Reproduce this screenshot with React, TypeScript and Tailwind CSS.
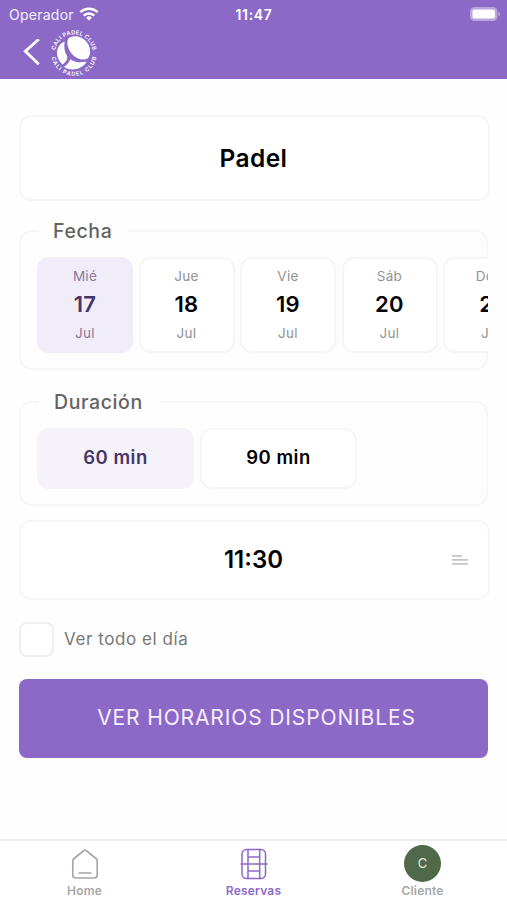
import { useState } from 'react'

interface Day {
  weekday: string
  day: string
  month: string
}

const days: Day[] = [
  { weekday: 'Mié', day: '17', month: 'Jul' },
  { weekday: 'Jue', day: '18', month: 'Jul' },
  { weekday: 'Vie', day: '19', month: 'Jul' },
  { weekday: 'Sáb', day: '20', month: 'Jul' },
  { weekday: 'Dom', day: '21', month: 'Jul' }
]

const durations = ['60 min', '90 min']

function WifiIcon() {
  return (
    <svg width="20" height="14" viewBox="0 0 20 14" fill="none" stroke="white" strokeWidth="2.5">
      <path d="M1.4 5.2a12.2 12.2 0 0 1 17.2 0" />
      <path d="M4.7 8.7a7.5 7.5 0 0 1 10.6 0" />
      <path d="M10 13.6 7.1 10.8a4.1 4.1 0 0 1 5.8 0z" fill="white" stroke="none" />
    </svg>
  )
}

function BatteryIcon() {
  return (
    <svg width="32" height="14" viewBox="0 0 32 14">
      <rect x="1" y="0" width="27.5" height="14" rx="4.5" fill="white" fillOpacity="0.4" />
      <rect x="3.5" y="2.5" width="22.5" height="9" rx="2" fill="white" />
      <path d="M29.5 4.8c2 .8 2 3.6 0 4.4z" fill="white" fillOpacity="0.5" />
    </svg>
  )
}

function ClubLogo() {
  return (
    <svg width="50" height="50" viewBox="0 0 50 50" fill="white">
      <defs>
        <path id="arc-top" d="M6.3 25a18.7 18.7 0 0 1 37.4 0" />
        <path id="arc-bottom" d="M2.1 25a22.9 22.9 0 0 0 45.8 0" />
      </defs>
      <text className="font-['Inter'] text-[5.6px] font-semibold" textAnchor="middle">
        <textPath href="#arc-top" startOffset="50%" textLength="53">CALI PADEL CLUB</textPath>
      </text>
      <text className="font-['Inter'] text-[5.6px] font-semibold" textAnchor="middle">
        <textPath href="#arc-bottom" startOffset="50%" textLength="63">CALI PADEL CLUB</textPath>
      </text>
      <path d="M19.3 10.4C23 7.6 30 7.6 34.5 11c5.2 3.9 7.6 9.7 6.3 15.4-.5 2.2-1.3 3.4-2.3 4.2-5.3 2.1-11.600.1-15.600-4.700-4-4.900-5.700-11.100-3.600-15.500z" />
      <path d="M15.600 13.400c-.8 5.200-.2 10.300 2.500 14.600 1 2.400-.8 5.800-4.500 8.400-3.700-3-5.600-7.200-5.600-11.900 0-4.700 3.200-9.300 7.600-11.100z" />
      <path d="M21.100 31.200c4.300 2.900 9.300 3.700 15 2.600 1-.2 1.600.1.900 1C32 42 20.500 43.400 15 38.800c3.200-2 5.200-4.200 6.100-7.600z" />
    </svg>
  )
}

function HomeIcon() {
  return (
    <svg width="28" height="32" viewBox="0 0 28 32" fill="none" stroke="#a7a7a7" strokeWidth="1.7" strokeLinejoin="round" strokeLinecap="round">
      <path d="M13 2.5Q14 1.8 15 2.5L25 10.5q1.2 1 1.2 2.4V27q0 3-3 3H4.8q-3 0-3-3V12.9q0-1.400 1.200-2.400z" />
      <path d="M8.2 25h11.6" />
    </svg>
  )
}

function CourtIcon() {
  return (
    <svg width="28" height="32" viewBox="0 0 28 32" fill="none" stroke="#8c69c7" strokeWidth="1.5" strokeLinecap="round">
      <rect x="2" y="1.5" width="23.5" height="29" rx="4.5" />
      <path d="M8 1.5v29M19.7 1.5v29M1 16h26M8 9h11.7M8 23h11.7" />
    </svg>
  )
}

export default function App() {
  const [selectedDay, setSelectedDay] = useState(0)
  const [selectedDuration, setSelectedDuration] = useState(0)
  const [allDay, setAllDay] = useState(false)

  return (
    <div className="flex h-[900px] w-[507px] flex-col overflow-hidden bg-[#fefefe] font-['Inter',sans-serif]">
      <header className="h-[79px] shrink-0 bg-[#8c69c7] text-white">
        <div className="grid h-7 grid-cols-3 items-center pr-[6px] pl-[9px]">
          <div className="flex items-center gap-[5px]">
            <span className="text-[14px] tracking-[0.25px] text-white/90">Operador</span>
            <WifiIcon />
          </div>
          <span className="pr-[2px] text-center text-[14px] font-semibold tracking-[0.7px]">11:47</span>
          <div className="flex justify-end pb-px">
            <BatteryIcon />
          </div>
        </div>
        <div className="flex h-[50px] items-center pl-[23px]">
          <svg width="18" height="28" viewBox="0 0 18 28" fill="none" stroke="white" strokeWidth="2.8">
            <path d="M15.8 .3 2.3 12.3 15.8 25.3" />
          </svg>
          <div className="ml-2">
            <ClubLogo />
          </div>
        </div>
      </header>

      <main className="flex flex-1 flex-col pt-9 pr-[17px] pl-[19px]">
        <div className="flex h-[86px] items-center justify-center rounded-xl border-2 border-[#f6f6f6] bg-white pr-[2px] text-[24.5px] font-semibold tracking-[0.4px] text-black">
          Padel
        </div>

        {/* Fecha */}
        <section className="mt-[29px] mr-[2px] h-[140px] rounded-xl border-2 border-[#f7f7f7] bg-[#fdfdfd]">
          <div className="-mt-[14px] ml-[18px] flex h-7 w-[89px] items-center bg-[#fefefe] pl-[14px] text-[19.5px] font-medium tracking-[0.6px] text-[#636363]">
            Fecha
          </div>
          <div className="mt-[11px] -mr-[2px] flex gap-[5.5px] overflow-hidden pl-4">
            {days.map((item, index) => {
              const selected = index === selectedDay

              return (
                <button
                  key={item.day}
                  onClick={() => setSelectedDay(index)}
                  className={`flex h-24 w-24 shrink-0 flex-col items-center rounded-xl border-2 pt-[7px] ${
                    selected ? 'border-[#f1edf8] bg-[#f1edf8] text-[#443667]' : 'border-[#f6f6f6] bg-white text-black'
                  }`}
                >
                  <span className={`text-[13.5px] leading-5 tracking-[0.3px] ${selected ? 'text-[#857b9d]' : 'text-[#929292]'}`}>
                    {item.weekday}
                  </span>
                  <span className="mt-[3px] text-[22px] leading-[30px] font-semibold tracking-[0.3px]">{item.day}</span>
                  <span className={`mt-1 text-[13.5px] leading-5 tracking-[0.3px] ${selected ? 'text-[#857b9d]' : 'text-[#929292]'}`}>
                    {item.month}
                  </span>
                </button>
              )
            })}
          </div>
        </section>

        {/* Duración */}
        <section className="mt-[31px] mr-[2px] h-[105px] rounded-xl border-2 border-[#f7f7f7] bg-[#fdfdfd]">
          <div className="-mt-[14px] ml-[18px] flex h-7 w-[121px] items-center bg-[#fefefe] pl-[15px] text-[19.5px] font-medium tracking-[0.6px] text-[#636363]">
            Duración
          </div>
          <div className="mt-[11px] flex gap-[6px] pl-4">
            {durations.map((label, index) => (
              <button
                key={label}
                onClick={() => setSelectedDuration(index)}
                className={`h-[61px] w-[157px] rounded-xl border-2 pb-[2px] text-[18.5px] font-semibold tracking-[0.5px] ${
                  index === selectedDuration
                    ? 'border-[#f5f2fa] bg-[#f5f2fa] text-[#443667]'
                    : 'border-[#f6f6f6] bg-white text-black'
                }`}
              >
                {label}
              </button>
            ))}
          </div>
        </section>

        <div className="mt-[14px] grid h-20 grid-cols-[1fr_auto_1fr] items-center rounded-xl border-2 border-[#f6f6f6] bg-white pr-5">
          <span />
          <span className="pl-[18px] text-[24px] font-semibold text-black">11:30</span>
          <svg className="justify-self-end" width="16" height="10" viewBox="0 0 16 10" fill="#c4c4c4">
            <path d="M0 0h10v1.7H0zM0 4h16v1.7H0zM0 8h16v1.7H0z" />
          </svg>
        </div>

        <div className="mt-[22px] flex items-center">
          <button
            aria-label="Ver todo el día"
            onClick={() => setAllDay(!allDay)}
            className={`h-[35px] w-[35px] rounded-lg border-2 border-[#efefef] ${allDay ? 'bg-[#8c69c7]' : 'bg-white'}`}
          />
          <span className="ml-[10px] text-[17px] tracking-[0.57px] text-[#777777]">Ver todo el día</span>
        </div>

        <button className="mt-[22px] mr-[2px] h-[79px] rounded-lg bg-[#8c69c7] pb-px pl-[6px] text-[21px] tracking-[0.87px] text-[#f8eeff]">
          VER HORARIOS DISPONIBLES
        </button>
      </main>

      <nav className="grid h-[61px] shrink-0 grid-cols-3 border-t-2 border-[#ededed] bg-white text-[12px] font-semibold text-[#a7a7a7]">
        <div className="flex flex-col items-center pt-[7px]">
          <HomeIcon />
          <span className="mt-[3px] leading-4 tracking-[0.2px]">Home</span>
        </div>
        <div className="flex flex-col items-center pt-[7px] text-[#8c69c7]">
          <CourtIcon />
          <span className="mt-[3px] leading-4 tracking-[0.2px]">Reservas</span>
        </div>
        <div className="flex flex-col items-center pt-1">
          <div className="flex h-[37px] w-[37px] items-center justify-center rounded-full bg-[#506a49] text-[13px] font-normal text-[#e3ebe0]">
            C
          </div>
          <span className="mt-px leading-4 tracking-[0.2px]">Cliente</span>
        </div>
      </nav>
    </div>
  )
}
